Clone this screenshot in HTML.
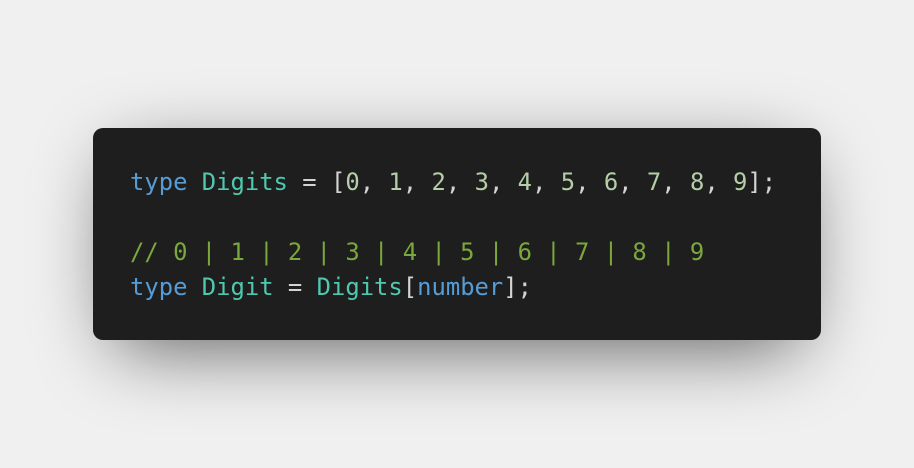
<!DOCTYPE html>
<html><head><style>
html,body{margin:0;padding:0;width:914px;height:468px;background:#f0f0f0;overflow:hidden}
.sh{position:absolute;left:113px;top:158px;width:688px;height:190px;background:rgba(0,0,0,0.6);border-radius:20px;filter:blur(38px)}
.box{position:absolute;left:93px;top:128px;width:728px;height:212px;background:#1e1e1e;border-radius:10px}
pre{position:absolute;left:130px;top:165px;margin:0;font-family:"DejaVu Sans Mono","Liberation Mono",monospace;font-size:23.85px;line-height:35px;color:#d4d4d4}
.k{color:#569cd6}.t{color:#4ec9b0}.n{color:#b5cea8}.c{color:#7aa83c}
</style></head><body>
<div class="sh"></div>
<div class="box"></div>
<pre><span class="k">type</span> <span class="t">Digits</span> = [<span class="n">0</span>, <span class="n">1</span>, <span class="n">2</span>, <span class="n">3</span>, <span class="n">4</span>, <span class="n">5</span>, <span class="n">6</span>, <span class="n">7</span>, <span class="n">8</span>, <span class="n">9</span>];

<span class="c">// 0 | 1 | 2 | 3 | 4 | 5 | 6 | 7 | 8 | 9</span>
<span class="k">type</span> <span class="t">Digit</span> = <span class="t">Digits</span>[<span class="k">number</span>];</pre>
</body></html>
